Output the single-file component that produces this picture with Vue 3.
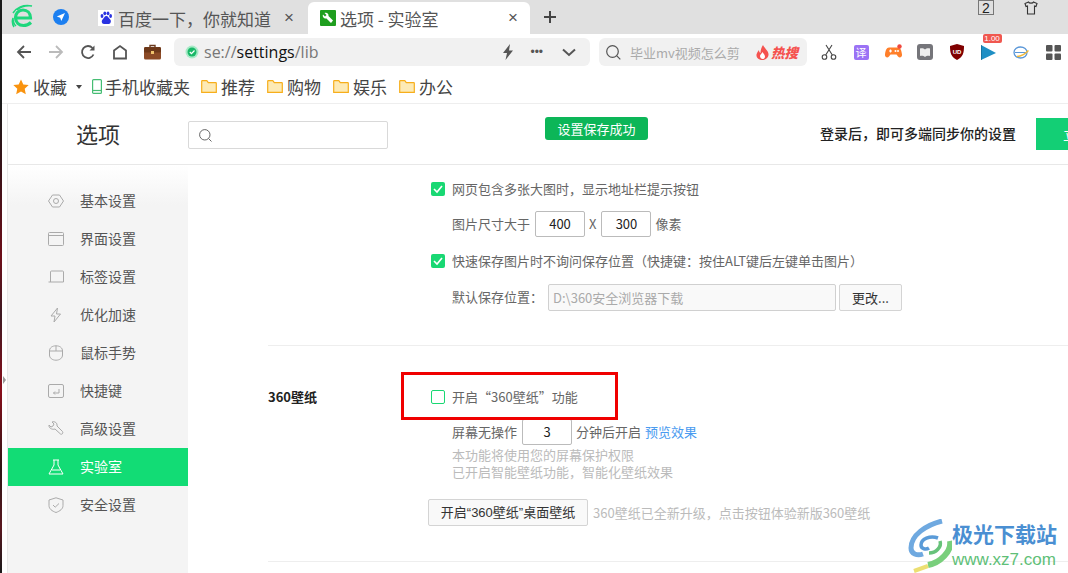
<template>
  <div class="screen">
    <div class="edge"><span class="edge__arrow" /></div>
    <div class="browser">
      <div class="tabbar">
        <svg class="logo" viewBox="0 0 24 26" width="24" height="26" fill="none" stroke="#1ed77c">
          <path d="M5 14h14.500c0-5-3.400-8-7.500-8-4.500 0-7.500 3.500-7.500 7.500 0 5 3.500 8 8 8 3 0 5.500-1.200 7.500-3" stroke-width="3.200" />
          <path d="M2 9C5 4 12 0 21 2c-5-.5-11 .5-15 4M3 23c-2-3-2-6-1-9 0 3 .5 6 3 8" stroke-width="1.500" />
        </svg>
        <svg class="nav-pin" viewBox="0 0 16 16" width="16" height="16">
          <circle cx="8" cy="8" r="8" fill="#1c7ff0" />
          <path d="M12 4 3.800 7.600l3.400 1.100 1.100 3.400z" fill="#fff" />
        </svg>
        <div class="tab">
          <svg class="tab__fav" viewBox="0 0 16 16" width="16" height="16">
            <rect width="16" height="16" fill="#fff" />
            <g fill="#2932e1">
              <ellipse cx="4" cy="6" rx="1.400" ry="1.900" />
              <ellipse cx="6.800" cy="3.300" rx="1.400" ry="1.900" />
              <ellipse cx="10" cy="3.300" rx="1.400" ry="1.900" />
              <ellipse cx="12.600" cy="6" rx="1.400" ry="1.900" />
              <path d="M8.300 6c2 0 2 2 3.500 3 2 1.500 1 5-1 5H6c-2.500 0-3-3.500-1-5 1.300-1 1.300-3 3.300-3z" />
            </g>
          </svg>
          <span class="tab__title">百度一下，你就知道</span>
          <span class="tab__close">×</span>
        </div>
        <div class="tab tab--active">
          <svg class="tab__fav" viewBox="0 0 16 16" width="16" height="16">
            <rect width="16" height="16" rx="1" fill="#1f9e1f" />
            <path d="M3 4.500 5 6.500l1.500-1.500L4.500 3c2-1 4.500.5 4 3L13 10.500 11 13 6.500 8.500c-2.500.5-4.500-2-3.500-4z" fill="#fff" />
          </svg>
          <span class="tab__title">选项 - 实验室</span>
          <span class="tab__close">×</span>
        </div>
        <svg class="tab-plus" viewBox="0 0 14 14" width="14" height="14" stroke="#444" stroke-width="2">
          <path d="M7 1v12M1 7h12" />
        </svg>
        <div class="window-icons">
          <span class="window-count">2</span>
          <svg viewBox="0 0 14 14" width="14" height="14" fill="none" stroke="#333" stroke-width="1.100">
            <path d="M4.500 1 1 2.500l1 3 1.500-.5V13h7V5l1.500.5 1-3L9.500 1c-.5 1.500-4.500 1.500-5 0z" />
          </svg>
        </div>
      </div>

      <div class="toolbar">
        <div class="nav-buttons">
          <svg viewBox="0 0 16 16" width="16" height="16" fill="none" stroke="#555" stroke-width="1.800">
            <path d="M15 8H2M8 2 2 8l6 6" />
          </svg>
          <svg viewBox="0 0 16 16" width="16" height="16" fill="none" stroke="#bbb" stroke-width="1.800">
            <path d="M1 8h13M8 2l6 6-6 6" />
          </svg>
          <svg viewBox="0 0 16 16" width="16" height="16" fill="none" stroke="#555" stroke-width="1.800">
            <path d="M13.500 10.500A6 6 0 1 1 12.500 4" />
            <path d="M14.500 1.500V6.500H9.500z" fill="#555" stroke="none" />
          </svg>
          <svg viewBox="0 0 16 16" width="16" height="16" fill="none" stroke="#555" stroke-width="1.800">
            <path d="M2 14.500V6.500L8 2l6 4.500v8z" />
          </svg>
          <svg viewBox="0 0 17 16" width="17" height="16">
            <path d="M6 3V1.500h5V3" fill="none" stroke="#6b3a1e" stroke-width="1.400" />
            <rect y="3" width="17" height="12.500" rx="1.500" fill="#8c4a26" />
            <rect y="3" width="17" height="5.500" rx="1.500" fill="#6d3819" />
            <rect x="7" y="7" width="3" height="3" fill="#f0c36d" />
          </svg>
        </div>
        <div class="address">
          <svg viewBox="0 0 14 14" width="14" height="14">
            <circle cx="7" cy="7" r="6.500" fill="#a6eac6" />
            <circle cx="7" cy="7" r="4.500" fill="#19b868" />
            <path d="M4.800 7 6.500 8.700 9.500 5.500" fill="none" stroke="#fff" stroke-width="1.200" />
          </svg>
          <span class="address__url">se://<b>settings</b>/lib</span>
          <svg class="address__bolt" viewBox="0 0 12 16" width="12" height="16">
            <path d="M8 0 1 9h4l-1.500 7L11 6.500H7z" fill="#555" />
          </svg>
          <span class="address__dots">•••</span>
          <svg class="address__chevron" viewBox="0 0 14 9" width="14" height="9" fill="none" stroke="#555" stroke-width="2">
            <path d="M1 1.500 7 7l6-5.500" />
          </svg>
        </div>
        <div class="search">
          <svg viewBox="0 0 15 15" width="15" height="15" fill="none" stroke="#555" stroke-width="1.200">
            <circle cx="6.500" cy="6.500" r="5.800" />
            <path d="m10.800 10.800 3.500 3.500" />
          </svg>
          <span class="search__hint">毕业mv视频怎么剪</span>
          <svg class="search__flame" viewBox="0 0 13 15" width="13" height="15">
            <path d="M7 0c1 3 5 5 5.500 9 .3 3-2.500 6-6 6S0 12.500.5 9.500C1 7.500 2 6.500 3 5c0 1.500.5 2.500 1.500 3C4.500 5 5.500 2 7 0z" fill="#f5524f" />
            <path d="M6.500 7c.5 1.500 2.500 2.500 2.500 4.500S7.500 14 6.500 14 4 13 4 11c0-1.500 2-2.500 2.500-4z" fill="#fff" />
          </svg>
          <span class="search__hot">热搜</span>
        </div>
        <div class="extensions">
          <svg viewBox="0 0 16 16" width="16" height="16" fill="none" stroke="#444" stroke-width="1.100">
            <circle cx="3.500" cy="13" r="2.300" />
            <circle cx="12.500" cy="13" r="2.300" />
            <path d="M4.700 11 11 1M11.300 11 5 1" />
          </svg>
          <span class="ext-translate">译</span>
          <svg viewBox="0 0 17 16" width="17" height="16">
            <path d="M4 3.500h9c2.500 0 3.500 3 4 7 .3 3-2.500 4-4 2l-1.500-2h-6L4 12.500c-1.500 2-4.300 1-4-2 .5-4 1.500-7 4-7z" fill="#ff7f2a" />
            <circle cx="14.500" cy="2.500" r="2.200" fill="#f0483e" />
            <path d="M4 7h3M5.500 5.500v3" stroke="#fff" stroke-width="1.200" />
            <circle cx="10.500" cy="7" r="1" fill="#fff" />
            <circle cx="13" cy="7" r="1" fill="#fff" />
          </svg>
          <svg viewBox="0 0 16 16" width="16" height="16">
            <rect width="16" height="16" rx="3" fill="#75757a" />
            <path d="M3 4.500c2-.5 4 0 5 1 1-1 3-1.500 5-1v7.500c-2-.5-4 0-5 1-1-1-3-1.500-5-1z" fill="#eee" />
          </svg>
          <svg viewBox="0 0 14 16" width="14" height="16">
            <path d="M7 0 14 2c0 7-1 11-7 14C1 13 0 9 0 2z" fill="#800000" />
            <text x="7" y="9.500" class="ext-ublock">UD</text>
          </svg>
          <div class="ext-player">
            <svg viewBox="0 0 15 15" width="15" height="15">
              <path d="M0 0 15 8 0 15z" fill="#1f8fc4" />
              <path d="M0 0v15" stroke="#155d80" stroke-width="1" />
            </svg>
            <span class="ext-player__badge">1.00</span>
          </div>
          <svg viewBox="0 0 16 14" width="16" height="14" fill="none">
            <ellipse cx="7.500" cy="7.500" rx="6.500" ry="5.500" stroke="#5a97d8" stroke-width="1.300" />
            <path d="M2 7.500h11" stroke="#5a97d8" stroke-width="1" />
            <path d="M4 11.500c4 0 9-3 11.500-6" stroke="#f0b93a" stroke-width="1.500" />
          </svg>
          <svg viewBox="0 0 15 15" width="15" height="15" fill="#555">
            <rect width="6.500" height="6.500" rx="1" />
            <rect x="8.500" width="6.500" height="6.500" rx="1" />
            <rect y="8.500" width="6.500" height="6.500" rx="1" />
            <rect x="8.500" y="8.500" width="6.500" height="6.500" rx="1" />
          </svg>
        </div>
      </div>

      <div class="bookmarks">
        <svg viewBox="0 0 16 16" width="16" height="16">
          <path d="m8 .5 2.300 5 5.400.6-4 3.700 1.100 5.400L8 12.500l-4.800 2.700 1.100-5.400-4-3.700 5.400-.6z" fill="#f9930f" />
        </svg>
        <span class="bookmarks__fav">收藏</span>
        <span class="bookmarks__caret" />
        <svg class="bookmarks__phone" viewBox="0 0 10 15" width="10" height="15" fill="none" stroke="#46bd73" stroke-width="1.200">
          <rect x=".6" y=".6" width="8.800" height="13.800" rx="1" />
          <path d="M.6 11.500h8.800" />
        </svg>
        <span class="bookmarks__mobile">手机收藏夹</span>
        <div v-for="name in folders" :key="name" class="bookmark">
          <svg viewBox="0 0 16 13" width="16" height="13">
            <path d="M.7 12.300V1.200C.7.900.9.700 1.200.700h4.600l1.500 2h7.500c.3 0 .5.200.5.500v9.100z" fill="#fdeab5" stroke="#f7ae1b" stroke-width="1.200" />
          </svg>
          <span>{{ name }}</span>
        </div>
      </div>

      <div class="page">
        <header class="page-head">
          <h1 class="page-head__title">选项</h1>
          <div class="page-head__search">
            <svg viewBox="0 0 13 13" width="13" height="13" fill="none" stroke="#666" stroke-width="1">
              <circle cx="5.800" cy="5.800" r="5.200" />
              <path d="m9.500 9.500 3 3" />
            </svg>
          </div>
          <span class="toast">设置保存成功</span>
          <strong class="page-head__sync">登录后，即可多端同步你的设置</strong>
          <span class="page-head__login">立即登录</span>
        </header>

        <div class="page-body">
          <nav class="sidebar">
            <a
              v-for="item in menu"
              :key="item.label"
              class="sidebar__item"
              :class="{ 'sidebar__item--active': item.active }"
            >
              <svg viewBox="0 0 16 16" width="16" height="16" fill="none" stroke="currentColor" stroke-width="1">
                <path :d="item.icon" />
              </svg>
              <span>{{ item.label }}</span>
            </a>
          </nav>

          <main class="content">
            <section class="group group--images">
              <div class="group__body">
                <label class="check-row">
                  <span class="check check--on">
                    <svg viewBox="0 0 14 14" width="14" height="14" fill="none" stroke="#fff" stroke-width="1.600">
                      <path d="m3 7 3 3 5-6" />
                    </svg>
                  </span>
                  <span class="txt">网页包含多张大图时，显示地址栏提示按钮</span>
                </label>
                <div class="sub-row sub-row--size">
                  <span class="txt">图片尺寸大于</span>
                  <span class="field field--size">400</span>
                  <span class="txt times">X</span>
                  <span class="field field--size">300</span>
                  <span class="txt">像素</span>
                </div>
                <label class="check-row check-row--second">
                  <span class="check check--on">
                    <svg viewBox="0 0 14 14" width="14" height="14" fill="none" stroke="#fff" stroke-width="1.600">
                      <path d="m3 7 3 3 5-6" />
                    </svg>
                  </span>
                  <span class="txt">快速保存图片时不询问保存位置（快捷键：按住ALT键后左键单击图片）</span>
                </label>
                <div class="sub-row sub-row--path">
                  <span class="txt">默认保存位置：</span>
                  <span class="field field--path">D:\360安全浏览器下载</span>
                  <span class="btn btn--change">更改...</span>
                </div>
              </div>
            </section>

            <section class="group group--wallpaper">
              <h2 class="group__label">360壁纸</h2>
              <div class="group__body">
                <label class="check-row">
                  <span class="check" />
                  <span class="txt">开启“360壁纸”功能</span>
                </label>
                <div class="sub-row sub-row--idle">
                  <span class="txt">屏幕无操作</span>
                  <span class="field field--minutes">3</span>
                  <span class="txt">分钟后开启</span>
                  <a class="txt link">预览效果</a>
                </div>
                <p class="notes">本功能将使用您的屏幕保护权限<br />已开启智能壁纸功能，智能化壁纸效果</p>
                <div class="desktop-row">
                  <span class="btn btn--desktop">开启“360壁纸”桌面壁纸</span>
                  <span class="desktop-row__note">360壁纸已全新升级，点击按钮体验新版360壁纸</span>
                </div>
              </div>
            </section>
          </main>
        </div>
      </div>

      <div class="highlight" />

      <div class="watermark">
        <svg class="watermark__logo" viewBox="0 0 44 54" width="44" height="54" fill="none">
          <path d="M34 2C18 6 3 16 3 29c0 6 6 8 12 6" stroke="#6fa9e0" stroke-width="5" />
          <path d="M30 19c-8-3-17 1-17 7 0 4 5 5 8 3" stroke="#5a9bd8" stroke-width="3.500" />
          <path d="M42 22c2 10-10 22-22 24" stroke="#79cf7c" stroke-width="6" />
          <path d="M32 22c2 6-4 12-11 12" stroke="#67c27a" stroke-width="3.500" />
          <path d="M20 47 6 52" stroke="#ecdf72" stroke-width="4" />
        </svg>
        <div class="watermark__text">
          <strong>极光下载站</strong>
          <span>www.xz7.com</span>
        </div>
      </div>
    </div>
  </div>
</template>

<script setup>
const folders = ['推荐', '购物', '娱乐', '办公']

const menu = [
  { label: '基本设置', icon: 'M4.500 2h7L15.500 8l-4 6h-7L.5 8zM8 5.500a2.500 2.500 0 1 0 0 5 2.500 2.500 0 0 0 0-5z' },
  { label: '界面设置', icon: 'M1.500 1.500h13a1 1 0 0 1 1 1v11a1 1 0 0 1-1 1h-13a1 1 0 0 1-1-1v-11a1 1 0 0 1 1-1zM.5 4.500h15' },
  { label: '标签设置', icon: 'M2.500 13V3a1 1 0 0 1 1-1h11a1 1 0 0 1 1 1v10M.5 13h15' },
  { label: '优化加速', icon: 'M9.500 1 3 9h4l-1 6 6.500-8H8.500z' },
  { label: '鼠标手势', icon: 'M8 .8c3.800 0 6.500 2 6.500 5.200v4c0 3-2.700 5.200-6.500 5.200S1.500 13 1.500 10V6C1.500 2.800 4.200.8 8 .8zM8 .8V6M1.500 6h13' },
  { label: '快捷键', icon: 'M2 1.500h12a1.500 1.500 0 0 1 1.500 1.500v10a1.500 1.500 0 0 1-1.500 1.500H2A1.500 1.500 0 0 1 .5 13V3A1.500 1.500 0 0 1 2 1.500zM11 6v4H5.500M7 8.500 5.500 10 7 11.500' },
  { label: '高级设置', icon: 'M1 4 3 6l2-1 1-2-2-2c3-1 5.500 1 5 4l5.500 5.500c1 1.500-.5 3.500-2 2.500L7 8c-3 1-6.500-1-6-4z' },
  { label: '实验室', active: true, icon: 'M5 1h6M6 1v5L1 15h14L10 6V1M4 11h8' },
  { label: '安全设置', icon: 'M8 .8 15 3v5.500c0 3.500-3 5.500-7 7-4-1.500-7-3.500-7-7V3zM5 8l2.200 2.200L11 6.500' },
]
</script>

<style>
html,
body {
  margin: 0;
  overflow: hidden;
  background: #fff;
}
</style>

<style scoped>
.screen {
  display: flex;
  width: 1068px;
  height: 573px;
  overflow: hidden;
  font-family: 'Noto Sans CJK SC', 'Liberation Sans', sans-serif;
  color: #555;
}

.edge {
  position: relative;
  flex: 0 0 2px;
  background: linear-gradient(180deg, #1a1a1a 0, #1a1a1a 18%, #3a1218 30%, #6e0f1a 45%, #3d1a22 55%, #8a0f1c 68%, #2c1414 82%, #5a1820 92%, #1a1a1a 100%);
}

.edge__arrow {
  position: absolute;
  top: 376px;
  left: 3px;
  border-top: 4px solid transparent;
  border-bottom: 4px solid transparent;
  border-left: 3px solid #999;
}

.browser {
  position: relative;
  flex: 0 0 1066px;
  min-width: 0;
}

/* tabs */
.tabbar {
  display: flex;
  align-items: flex-end;
  height: 34px;
  background: #e0e0e0;
}

.logo {
  flex: none;
  align-self: center;
  margin: 0 0 0 9px;
}

.nav-pin {
  flex: none;
  align-self: center;
  margin: 0 19px 0 18px;
}

.tab {
  display: flex;
  flex: 0 0 218px;
  align-items: center;
  box-sizing: border-box;
  height: 32px;
  padding: 0 12px 0 10px;
  border-radius: 6px 6px 0 0;
  color: #555;
  font-size: 17px;
}

.tab--active {
  flex-basis: 222px;
  margin-left: 2px;
  padding-left: 12px;
  background: #fff;
}

.tab__fav {
  flex: none;
  margin-right: 4px;
}

.tab__title {
  flex: 1;
  white-space: nowrap;
}

.tab__close {
  color: #555;
  font-family: 'Liberation Sans', sans-serif;
  font-size: 17px;
}

.tab-plus {
  flex: none;
  align-self: center;
  margin-left: 13px;
}

.window-icons {
  display: flex;
  align-self: flex-start;
  gap: 30px;
  margin-left: 421px;
  padding-top: 1px;
}

.window-count {
  box-sizing: border-box;
  width: 16px;
  height: 15px;
  border: 1px solid #777;
  margin-top: -1px;
  color: #222;
  font: 14px/14px 'Liberation Sans', sans-serif;
  text-align: center;
}

/* toolbar */
.toolbar {
  display: flex;
  align-items: center;
  height: 36px;
  background: #fff;
}

.nav-buttons {
  display: flex;
  align-items: center;
  gap: 16px;
  margin-left: 14px;
}

.address {
  display: flex;
  flex: 0 0 416px;
  align-items: center;
  box-sizing: border-box;
  min-width: 0;
  height: 28px;
  margin-left: 13px;
  padding-left: 11px;
  border-radius: 6px;
  background: #f1f1f1;
}

.address__url {
  margin-left: 5px;
  color: #777;
  font-family: 'Open Sans', 'Liberation Sans', sans-serif;
  font-size: 16px;
}

.address__url b {
  color: #111;
  font-weight: 400;
}

.address__bolt {
  margin-left: 184px;
}

.address__dots {
  margin-left: 16px;
  color: #555;
  font: 12px 'Liberation Sans', sans-serif;
}

.address__chevron {
  margin-left: 19px;
}

.search {
  display: flex;
  flex: 0 0 208px;
  align-items: center;
  box-sizing: border-box;
  height: 28px;
  margin-left: 9px;
  padding-left: 7px;
  border-radius: 6px;
  background: #f1f1f1;
}

.search__hint {
  width: 126px;
  margin-left: 9px;
  color: #aaa;
  font-size: 13px;
  white-space: nowrap;
}

.search__flame {
  flex: none;
}

.search__hot {
  margin-left: 2px;
  color: #f5524f;
  font-size: 13.500px;
  font-style: italic;
  font-weight: 900;
  white-space: nowrap;
}

.extensions {
  display: grid;
  grid-auto-columns: 32px;
  grid-auto-flow: column;
  align-items: center;
  justify-items: center;
  margin-left: 6px;
}

.ext-translate {
  width: 15px;
  height: 15px;
  border-radius: 2px;
  background: #9b72f5;
  color: #fff;
  font-size: 11px;
  line-height: 15px;
  text-align: center;
}

.ext-ublock {
  fill: #fff;
  font: bold 6px 'Liberation Sans', sans-serif;
  text-anchor: middle;
}

.ext-player {
  position: relative;
  display: flex;
  margin-left: -2px;
}

.ext-player__badge {
  position: absolute;
  top: -11px;
  left: 2px;
  width: 19px;
  height: 9px;
  border-radius: 2px;
  background: #f0574f;
  color: #fff;
  font: 8px/9px 'Liberation Sans', sans-serif;
  text-align: center;
}

/* bookmarks */
.bookmarks {
  display: flex;
  align-items: center;
  box-sizing: border-box;
  height: 34px;
  padding-left: 11px;
  border-bottom: 1px solid #eee;
  background: #fff;
  color: #444;
  font-size: 17px;
}

.bookmarks__fav {
  margin-left: 4px;
  white-space: nowrap;
}

.bookmarks__caret {
  margin-left: 9px;
  border-top: 4px solid #444;
  border-right: 3px solid transparent;
  border-left: 3px solid transparent;
}

.bookmarks__phone {
  flex: none;
  margin-left: 10px;
}

.bookmarks__mobile {
  margin-left: 3px;
  white-space: nowrap;
}

.bookmark {
  display: flex;
  flex: none;
  align-items: center;
  gap: 4px;
  margin-left: 11px;
  white-space: nowrap;
}

.bookmark + .bookmark {
  margin-left: 12px;
}

/* settings page */
.page {
  height: 469px;
  margin-left: 5px;
  overflow: hidden;
  border-left: 1px solid #e8e8e8;
}

.page-head {
  position: relative;
  display: flex;
  align-items: center;
  box-sizing: border-box;
  height: 61px;
  border-bottom: 1px solid #e8e8e8;
  white-space: nowrap;
}

.page-head__title {
  flex: 0 0 112px;
  margin: -2px 0 0 68px;
  color: #333;
  font-size: 22px;
  font-weight: 400;
}

.page-head__search {
  display: flex;
  flex: 0 0 200px;
  align-items: center;
  box-sizing: border-box;
  height: 28px;
  margin-top: 2px;
  padding-left: 10px;
  border: 1px solid #d9d9d9;
  border-radius: 2px;
}

.toast {
  position: absolute;
  top: 13px;
  left: 537px;
  width: 103px;
  height: 23px;
  border-radius: 3px;
  background: #0cb658;
  color: #fff;
  font-size: 13px;
  line-height: 23px;
  text-align: center;
}

.page-head__sync {
  margin: -2px 0 0 432px;
  color: #222;
  font-size: 14px;
  font-weight: 500;
}

.page-head__login {
  flex: 0 0 90px;
  height: 32px;
  margin-left: 20px;
  padding-left: 27px;
  background: #13cf75;
  color: #fff;
  font-size: 14px;
  line-height: 32px;
}

.page-body {
  display: flex;
  height: 408px;
}

.sidebar {
  display: flex;
  flex: 0 0 180px;
  flex-direction: column;
  box-sizing: border-box;
  padding-top: 17px;
  background: linear-gradient(180deg, #fff 0, #f4f4f4 40px);
}

.sidebar__item {
  display: flex;
  flex: 0 0 38px;
  align-items: center;
  gap: 16px;
  padding-left: 40px;
  color: #555;
  font-size: 14px;
}

.sidebar__item span {
  padding-bottom: 2px;
}

.sidebar__item svg {
  color: #aaa;
}

.sidebar__item--active {
  background: #12dc75;
  color: #fff;
}

.sidebar__item--active svg {
  color: #fff;
}

.content {
  flex: 1;
  min-width: 0;
  padding-left: 80px;
  color: #666;
  font-size: 13px;
}

.txt {
  padding-bottom: 2px;
}

.group {
  display: grid;
  grid-template-columns: 163px 1fr;
  box-sizing: border-box;
  border-bottom: 1px solid #eee;
}

.group--images {
  height: 181px;
  padding-top: 12px;
}

.group--wallpaper {
  height: 216px;
  padding-top: 39px;
}

.group__label {
  grid-column: 1;
  margin: 0;
  color: #222;
  font-size: 13px;
  font-weight: 700;
  line-height: 24px;
}

.group__body {
  grid-column: 2;
}

.check-row {
  display: flex;
  align-items: center;
  gap: 7px;
  height: 24px;
  white-space: nowrap;
}

.check-row--second {
  margin-top: 12px;
}

.check {
  display: flex;
  box-sizing: border-box;
  flex: none;
  width: 14px;
  height: 14px;
  border: 1px solid #19d873;
  border-radius: 2px;
}

.check--on {
  border: 0;
  background: #19d873;
}

.sub-row {
  display: flex;
  align-items: center;
  gap: 4px;
  padding-left: 21px;
  white-space: nowrap;
}

.sub-row--size {
  margin-top: 10px;
}

.sub-row--path {
  margin-top: 11px;
}

.sub-row--idle {
  margin-top: 10px;
}

.field {
  display: block;
  box-sizing: border-box;
  height: 26px;
  border: 1px solid #bbb;
  border-radius: 2px;
  background: #fff;
  color: #222;
  font-size: 13px;
  line-height: 24px;
  text-align: center;
}

.field--size {
  width: 50px;
  margin-left: 1px;
}

.field--size + .times + .field--size {
  margin-left: 0;
}

.times {
  margin-right: 1px;
  color: #666;
}

.field--path {
  width: 288px;
  height: 27px;
  margin-left: 1px;
  padding-left: 4px;
  border-color: #d0d0d0;
  background: #f9f9f9;
  color: #aaa;
  line-height: 25px;
  text-align: left;
}

.field--minutes {
  width: 50px;
  margin: 0 0 0 1px;
}

.btn {
  display: block;
  box-sizing: border-box;
  border: 1px solid #d4d4d4;
  border-radius: 2px;
  background: #f9f9f9;
  color: #333;
  text-align: center;
}

.btn--change {
  width: 63px;
  height: 27px;
  margin-left: -1px;
  line-height: 25px;
}

.link {
  color: #4a9bf0;
}

.notes {
  margin: 1px 0 0;
  padding-left: 21px;
  color: #bbb;
  font-size: 13px;
  line-height: 17px;
  white-space: nowrap;
}

.desktop-row {
  display: flex;
  align-items: center;
  gap: 5px;
  margin: 19px 0 0 -3px;
  white-space: nowrap;
}

.btn--desktop {
  flex: 0 0 160px;
  height: 27px;
  font-family: 'Liberation Sans', 'Noto Sans CJK SC', sans-serif;
  line-height: 25px;
}

.desktop-row__note {
  color: #bbb;
}

/* annotation over the page */
.highlight {
  position: absolute;
  top: 372px;
  left: 399px;
  box-sizing: border-box;
  width: 217px;
  height: 48px;
  border: 3px solid #f00000;
}

.watermark {
  position: absolute;
  top: 519px;
  left: 906px;
  display: flex;
}

.watermark__logo {
  flex: none;
}

.watermark__text {
  display: flex;
  flex-direction: column;
  white-space: nowrap;
}

.watermark__text strong {
  color: #4a8fd2;
  font-size: 21px;
  font-weight: 700;
  line-height: 28px;
}

.watermark__text span {
  margin-top: 3px;
  color: #5fbf78;
  font: 17px/20px 'Liberation Sans', sans-serif;
}
</style>
